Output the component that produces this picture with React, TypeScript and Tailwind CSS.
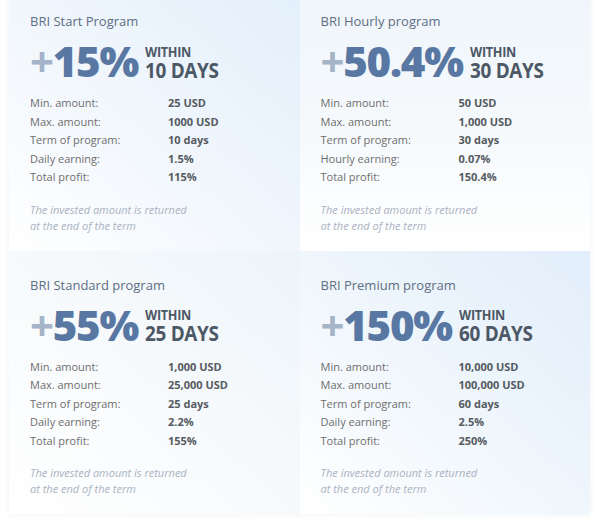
// Investment plan cards — 2x2 grid of BRI programs.

type Plan = {
  title: string;
  percent: string;
  days: string;
  rows: [string, string][];
  bg: string;
};

const PLANS: Plan[] = [
  {
    title: "BRI Start Program",
    percent: "15%",
    days: "10 DAYS",
    rows: [
      ["Min. amount:", "25 USD"],
      ["Max. amount:", "1000 USD"],
      ["Term of program:", "10 days"],
      ["Daily earning:", "1.5%"],
      ["Total profit:", "115%"],
    ],
    bg: "bg-linear-to-bl from-[#e3effb] via-[#f0f6fc] to-white",
  },
  {
    title: "BRI Hourly program",
    percent: "50.4%",
    days: "30 DAYS",
    rows: [
      ["Min. amount:", "50 USD"],
      ["Max. amount:", "1,000 USD"],
      ["Term of program:", "30 days"],
      ["Hourly earning:", "0.07%"],
      ["Total profit:", "150.4%"],
    ],
    bg: "bg-linear-to-b from-[#eff5fb] via-[#f5f9fc] to-white",
  },
  {
    title: "BRI Standard program",
    percent: "55%",
    days: "25 DAYS",
    rows: [
      ["Min. amount:", "1,000 USD"],
      ["Max. amount:", "25,000 USD"],
      ["Term of program:", "25 days"],
      ["Daily earning:", "2.2%"],
      ["Total profit:", "155%"],
    ],
    bg: "bg-linear-to-bl from-[#edf4fa] via-[#f7fafc] to-white",
  },
  {
    title: "BRI Premium program",
    percent: "150%",
    days: "60 DAYS",
    rows: [
      ["Min. amount:", "10,000 USD"],
      ["Max. amount:", "100,000 USD"],
      ["Term of program:", "60 days"],
      ["Daily earning:", "2.5%"],
      ["Total profit:", "250%"],
    ],
    bg: "bg-linear-to-bl from-[#e2eefb] via-[#eff6fc] to-white",
  },
];

function PlanCard({ plan }: { plan: Plan }) {
  return (
    <div className={`flex flex-col pl-[21px] pr-4 pt-[25px] pb-[17px] ${plan.bg}`}>
      <h3 className="text-[13px] leading-[18px] text-[#5d6e83]">{plan.title}</h3>

      <div className="mt-[10px] flex items-center h-[42px]">
        <span className="text-[42px] leading-[42px] font-extrabold tracking-[-0.03em] text-[#5977a3]">
          <span className="font-bold text-[#a5b4c9]">+</span>
          {plan.percent}
        </span>
        <span className="ml-[7px] flex flex-col font-bold text-[#4d5866] tracking-[-0.02em] mt-[2px] scale-x-90 origin-left">
          <span className="text-[14px] leading-[16px]">WITHIN</span>
          <span className="text-[21px] leading-[21px]">{plan.days}</span>
        </span>
      </div>

      <div className="mt-[12px] flex flex-col">
        {plan.rows.map(([k, v]) => (
          <div key={k} className="flex text-[11px] leading-[18.5px]">
            <span className="w-[138px] text-[#6e6e6e]">{k}</span>
            <span className="font-bold text-[#555a60]">{v}</span>
          </div>
        ))}
      </div>

      <p className="mt-[15px] text-[11px] leading-[16px] italic text-[#a9b3c1]">
        The invested amount is returned
        <br />
        at the end of the term
      </p>
    </div>
  );
}

export default function App() {
  return (
    <div
      className="w-[600px] h-[529px] overflow-hidden bg-white"
      style={{ fontFamily: '"Open Sans", "Liberation Sans", sans-serif' }}
    >
      <div className="-mt-[13px] ml-[9px] w-[581px] grid grid-cols-2 shadow-[0_0_6px_rgba(40,60,90,0.08)]">
        {PLANS.map((p) => (
          <PlanCard key={p.title} plan={p} />
        ))}
      </div>
    </div>
  );
}
